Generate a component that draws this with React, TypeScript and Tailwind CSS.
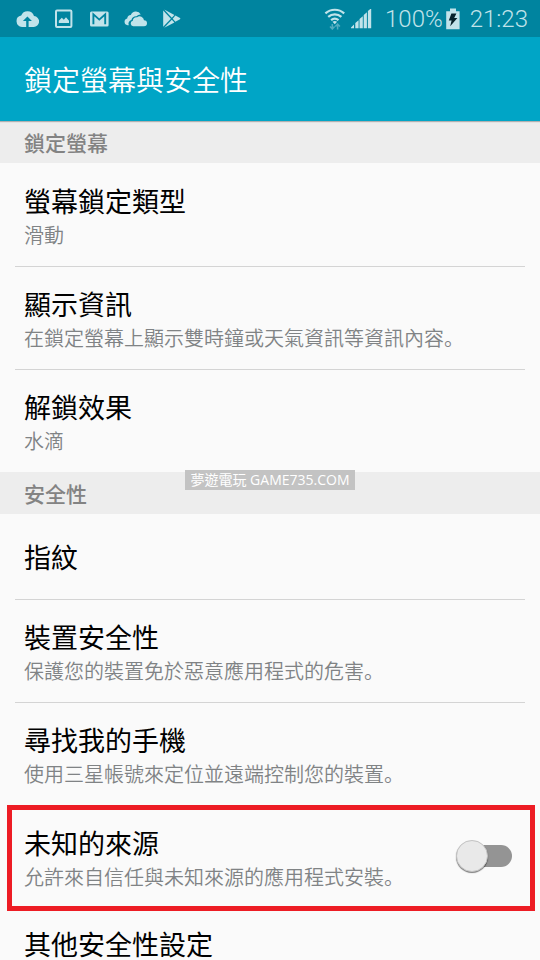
import { useState } from "react";

const LOCK_ITEMS = [
  { title: "螢幕鎖定類型", summary: "滑動" },
  { title: "顯示資訊", summary: "在鎖定螢幕上顯示雙時鐘或天氣資訊等資訊內容。" },
  { title: "解鎖效果", summary: "水滴" },
];

const SECURITY_ITEMS = [
  { title: "指紋", summary: "" },
  { title: "裝置安全性", summary: "保護您的裝置免於惡意應用程式的危害。" },
  { title: "尋找我的手機", summary: "使用三星帳號來定位並遠端控制您的裝置。" },
];

const StatusBar = () => {
  return (
    <div className="flex h-[37px] shrink-0 items-center justify-between bg-[#00849f] pr-3 pl-4 text-[#c1e3ea]">
      <div className="flex items-center gap-4">
        {/* upload */}
        <svg width="23" height="20" viewBox="0 0 23 20" fill="currentColor">
          <path
            fillRule="evenodd"
            d="M6 17.9a5.7 5.7 0 0 1-.8-11.3A6.8 6.8 0 0 1 18 7.1a5.4 5.4 0 0 1-.6 10.8H12.6V12h3.3L11.4 7.4 6.9 12h3.3v5.9z"
          />
        </svg>
        {/* picture */}
        <svg width="18" height="20" viewBox="0 0 18 20">
          <rect x="1" y="1.5" width="15.4" height="16.6" rx="1" fill="none" stroke="currentColor" strokeWidth="2" />
          <path d="M3.8 14v-2.3l3-3 2 2 2.2-2.4 3 3.4V14z" fill="currentColor" />
        </svg>
        {/* mail */}
        <svg width="20" height="20" viewBox="0 0 20 20">
          <rect x="1" y="2.5" width="18.6" height="15" rx="1.5" fill="currentColor" />
          <path d="M4.4 15.2V5.4l5.9 5.2 5.9-5.2v9.8" fill="none" stroke="#00849f" strokeWidth="1.9" />
        </svg>
        {/* cloud drive */}
        <svg className="-ml-px" width="23" height="20" viewBox="0 0 23 20" fill="currentColor">
          <path d="M4.8 16.2H3.6A3.4 3.4 0 0 1 3.2 9.5 4 4 0 0 1 6.8 6a5.6 5.6 0 0 1 10-.6 5 5 0 0 0-4.3 1.9A5 5 0 0 0 7.4 11a3.7 3.7 0 0 0-2.6 5.2z" />
          <path d="M9.3 17.3a2.8 2.8 0 0 1-.5-5.5 3.9 3.9 0 0 1 4.3-3.5 4.3 4.3 0 0 1 6.9 3 3 3 0 0 1 0 6z" />
        </svg>
        {/* play store */}
        <svg width="18" height="20" viewBox="0 0 18 20" fill="currentColor">
          <path d="M.2 1.6v16.2l7.7-8.1z" />
          <path d="M1.2.6 8.8 8.7 11.4 6z" />
          <path d="M1.2 18.8 8.8 10.7 11.4 13.4z" />
          <path d="M12.4 6.6 9.7 9.7l2.7 3.1 4.6-2.5q.8-.6 0-1.2z" />
        </svg>
      </div>
      <div className="flex items-center">
        {/* wifi */}
        <svg className="mr-[5px]" width="22" height="22" viewBox="0 0 22 22" fill="none" stroke="currentColor">
          <path d="M1.4 5.4a14 14 0 0 1 18.8 0M4.2 8.9a10 10 0 0 1 13.2 0M7.1 12.1a5.8 5.8 0 0 1 7.4 0" strokeWidth="2.2" />
          <path d="M8.5 13.8q2.3-1.5 4.6 0l-2.3 2.4z" fill="currentColor" stroke="none" />
          <path
            d="M8.3 16v5M6 18.6l2.3 2.4 2.3-2.4M13.6 21.4v-5M11.3 18.6l2.3-2.4 2.3 2.4"
            stroke="#52acbf"
            strokeWidth="1.5"
          />
        </svg>
        {/* signal */}
        <svg className="mr-[13px]" width="21" height="20" viewBox="0 0 21 20" fill="currentColor">
          <path d="M0 19.2v-.8l3-2.8v3.6zM4.3 19.2v-5.1l3.3-2.8v7.9zM8.5 19.2V10l3.3-2.8v12zM12.7 19.2V6l3.2-2.8v16zM16.9 19.2V2L20.2-.8v20z" />
        </svg>
        <span className="text-2xl font-light font-[Roboto,sans-serif]">100%</span>
        {/* battery */}
        <svg className="mr-[10px] ml-[3px]" width="14" height="22" viewBox="0 0 14 22">
          <path d="M4 .5h6v2.7h3.6v18H.2v-18H4z" fill="currentColor" />
          <path d="M5.4 5.6h5L8.2 10h3.2L4.2 18.3l1.4-5.7H2.8z" fill="#06222b" />
        </svg>
        <span className="text-2xl font-light font-[Roboto,sans-serif]">21:23</span>
      </div>
    </div>
  );
};

const SectionHeader = ({ title }: { title: string }) => {
  return (
    <h2 className="h-[42px] bg-[#ededed] px-6 text-[21px] leading-[42px] font-medium text-[#838383]">{title}</h2>
  );
};

const ItemText = ({ title, summary }: { title: string; summary: string }) => {
  return (
    <div>
      <h3 className="text-[27px] leading-8 text-black">{title}</h3>
      {summary && <p className="mt-0.5 text-[20px] leading-8 font-[350] text-[#808385]">{summary}</p>}
    </div>
  );
};

const SettingsList = ({ items }: { items: { title: string; summary: string }[] }) => {
  return (
    <ul className="mx-[15px]">
      {items.map((item) => (
        <li key={item.title} className="border-t border-[#d4d4d4] first:border-transparent">
          <button
            type="button"
            className={`block w-full px-[9px] text-left ${item.summary ? "pt-[21px] pb-[15px]" : "py-[26px]"}`}
          >
            <ItemText title={item.title} summary={item.summary} />
          </button>
        </li>
      ))}
    </ul>
  );
};

const App = () => {
  const [unknownSources, setUnknownSources] = useState(false);

  return (
    <div className="relative flex h-screen flex-col overflow-hidden bg-[#fafafa] font-['Noto_Sans_CJK_SC',sans-serif]">
      <StatusBar />
      <header className="z-10 flex h-[84px] shrink-0 items-center bg-[#00a5c6] px-6 shadow-[0_1px_1px_rgba(0,0,0,0.25)]">
        <h1 className="text-[28px] leading-10 font-[350] text-white">鎖定螢幕與安全性</h1>
      </header>

      <main className="min-h-0 flex-1 overflow-y-auto [scrollbar-width:none]">
        <SectionHeader title="鎖定螢幕" />
        <SettingsList items={LOCK_ITEMS} />
        <SectionHeader title="安全性" />
        <SettingsList items={SECURITY_ITEMS} />

        {/* highlighted row */}
        <div className="relative mx-[15px] border-t border-[#d4d4d4]">
          <label className="flex items-center justify-between px-[9px] pt-[21px] pb-[15px]">
            <ItemText title="未知的來源" summary="允許來自信任與未知來源的應用程式安裝。" />
            <span className="relative mr-1 mb-2 flex h-8 w-14 shrink-0 items-center">
              <input
                type="checkbox"
                role="switch"
                checked={unknownSources}
                onChange={(e) => setUnknownSources(e.target.checked)}
                className="peer ml-auto h-[22px] w-11 appearance-none rounded-full bg-[#949494] checked:bg-[#00a5c6]"
              />
              <span className="pointer-events-none absolute left-0 size-8 rounded-full border border-[#c4c4c4] bg-[#e9e9e9] shadow-[0_1px_1px_rgba(0,0,0,0.5)] peer-checked:left-6" />
            </span>
          </label>
          <div className="pointer-events-none absolute -top-px -right-[10px] -bottom-[3px] -left-2 border-[5px] border-[#ed1c24]" />
        </div>

        <button type="button" className="block w-full px-6 pt-5 text-left">
          <ItemText title="其他安全性設定" summary="" />
        </button>
      </main>

      <div className="absolute top-1/2 left-1/2 z-20 h-5 w-[170px] -translate-x-1/2 -translate-y-1/2 bg-[#c3c3c3] text-center text-[14px] leading-5 whitespace-nowrap text-white font-['Open_Sans','Noto_Sans_CJK_TC',sans-serif]">
        夢遊電玩 GAME735.COM
      </div>
    </div>
  );
};

export default App;
